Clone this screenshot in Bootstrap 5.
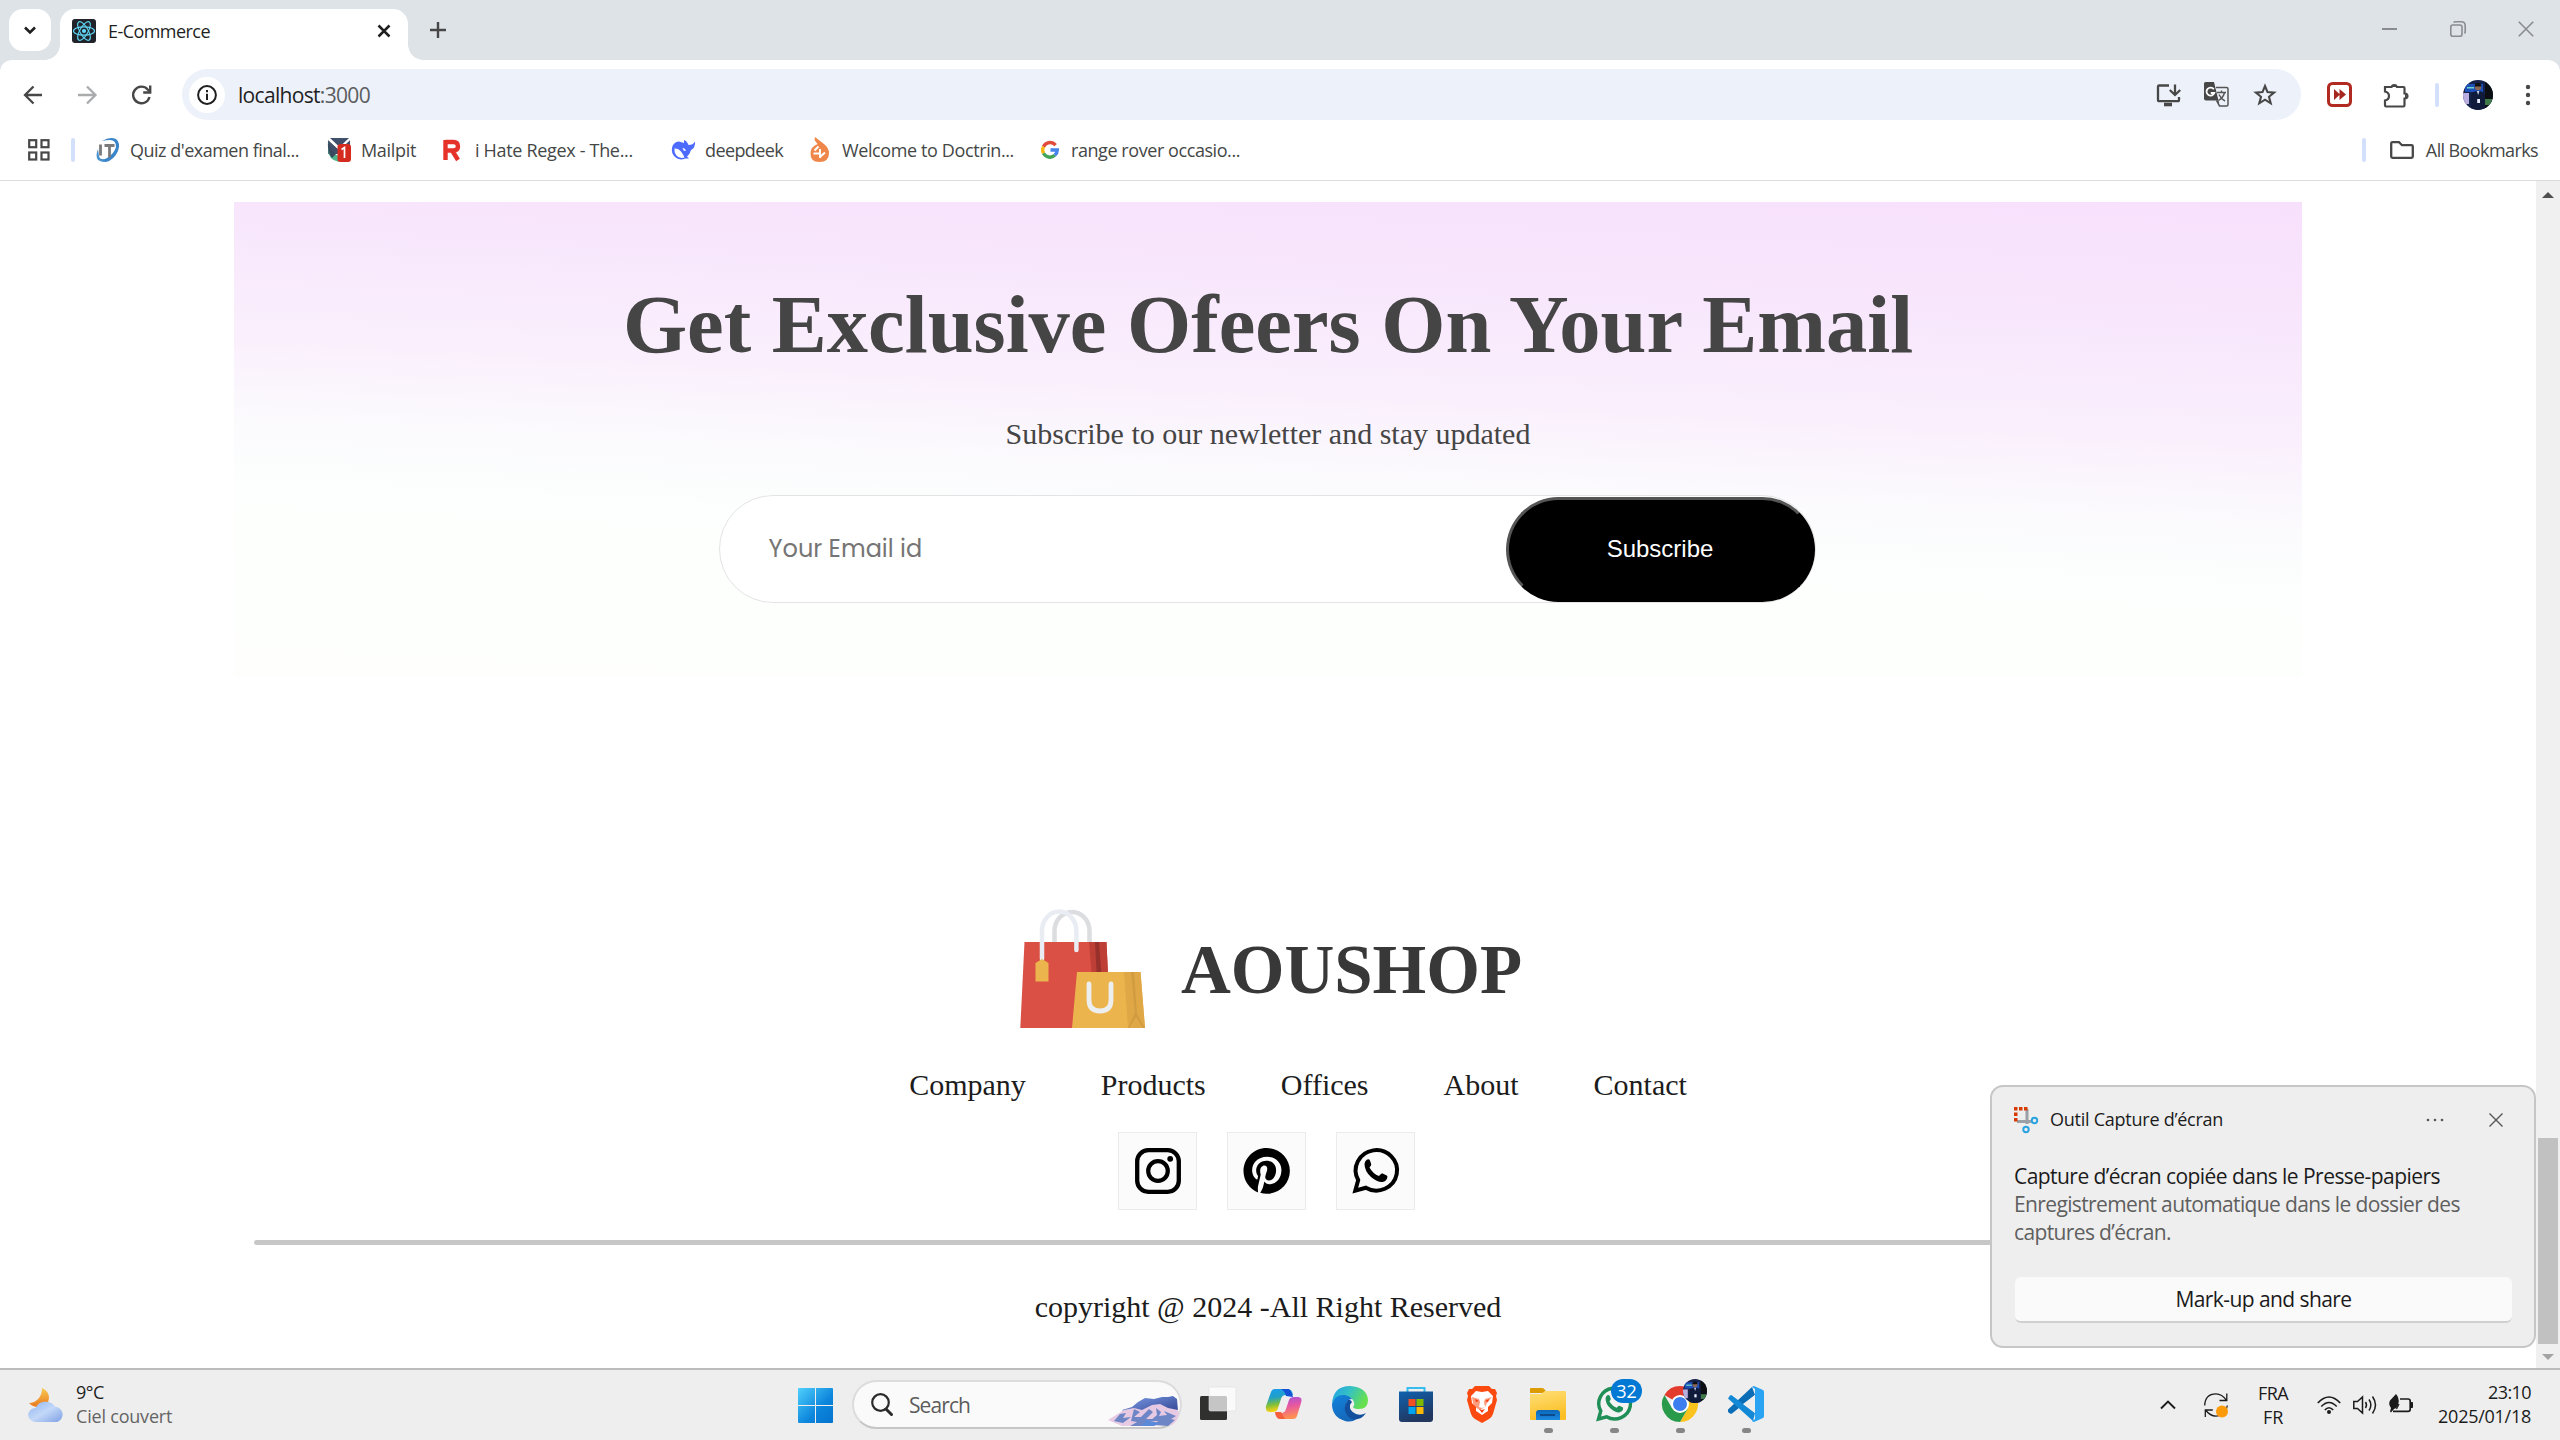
<!DOCTYPE html>
<html lang="en">
<head>
<meta charset="utf-8">
<title>E-Commerce</title>
<link href="https://cdn.jsdelivr.net/npm/bootstrap@5.3.0/dist/css/bootstrap.min.css" rel="stylesheet">
<style>
html,body{width:2560px;height:1440px;overflow:hidden}
body{font-family:"Open Sans","Noto Sans",sans-serif;font-size:18px;line-height:24px;color:#1f1f1f;background:#fff}
svg{display:block;flex:none;overflow:visible}
.t{white-space:nowrap;flex:none;display:block}
/* tracking per label */
.w-tab{letter-spacing:-.55px}.w-url{letter-spacing:-.68px}
.q1{letter-spacing:-.5px;margin-left:10px}.q2{letter-spacing:-.32px;margin-left:10px}.q3{letter-spacing:-.32px}.q4{letter-spacing:-.6px;margin-left:10px}
.q5{letter-spacing:-.39px}.q6{letter-spacing:-.43px}.q7{letter-spacing:-.6px}
.q8{letter-spacing:-.45px}.q9{letter-spacing:-.2px;color:#646464}.qs{letter-spacing:-.9px;margin-left:16px}
.qa{letter-spacing:-.6px}.qb{letter-spacing:-.2px}.qc{letter-spacing:-.58px}.qd{letter-spacing:-.26px}
.qe{letter-spacing:-.25px;margin-left:12px;margin-top:-2px}.qf{letter-spacing:-.55px}.qg,.qh{letter-spacing:-.63px}.qi{letter-spacing:-.58px}
/* tab strip */
.tabstrip{height:60px;background:#dee3e7;padding-left:9px}
.tabsearch{width:42px;height:42px;border-radius:14px;background:#fff;margin-top:9px}
.apptab{width:348px;height:51px;margin:9px 0 0 9px;background:#fff;border-radius:15px 15px 0 0;padding:0 17px 8px 12px;position:relative}
.apptab:before,.apptab:after{content:"";position:absolute;bottom:0;width:15px;height:15px}
.apptab:before{left:-15px;background:radial-gradient(circle at 0 0,transparent 14.5px,#fff 15px)}
.apptab:after{right:-15px;background:radial-gradient(circle at 100% 0,transparent 14.5px,#fff 15px)}
.newtab{margin:22px 0 0 22px}
.wincontrols{margin:21px 26px 0 auto;gap:52px}
/* toolbar */
.toolwrap{background:#dee3e7}
.toolbar{height:69px;background:#fff;border-radius:12px 12px 0 0;padding:0 24px 0 21px}
.ic-fwd{margin:0 30px 0 31px}
.ic-ext{margin-left:26px}
.ic-puz{margin-left:31px}
.sep-tool{margin-left:26px}
.ic-me{margin-left:24px}
.omnibox{height:51px;border-radius:26px;background:#edf1fa;width:2119px;margin-left:28px;padding:0 24px 0 7px}
.infodisc{width:36px;height:36px;border-radius:50%;background:#fff}
.urltext{font-size:21px;margin-left:13px;line-height:28px}
.port{color:#5a5d60}
.vsep{width:4px;height:24px;border-radius:2px;background:#d3e0fb;flex:none}
/* bookmarks */
.bookbar{height:52px;border-bottom:1px solid #dadde0;padding:0 22px 10px 27px;color:#444746}
.sep-book{margin:0 21px 0 20px}
.mk{height:24px}
.k1{width:231px}.k2{width:116px}.k3{width:228px}.k4{width:139px}.k5{width:231px}
/* page */
.viewport{height:1187px}
.shop{width:2536px;font-family:"Liberation Serif",serif;padding-top:21px}
.banner{width:2068px;height:475px;padding-top:77px;color:#454545;background:linear-gradient(183deg,#f7e0fc 0%,#f8e6fc 20%,#faf0fd 42%,#fbf9fd 54%,#fcfffd 67%,#fefffc 100%)}
.bigtitle{font-size:82.5px;line-height:90px;font-weight:700;margin:0}
.subt{font-size:30px;line-height:34px;margin-top:48px}
.mailform{width:1097px;height:108px;margin:44px 2px 0 0;border:1.5px solid #e3e3e3;border-radius:54px;background:#fff;padding-left:49px}
.mailform .ph{font-family:"Poppins","Lato",sans-serif;font-size:24px;line-height:36px;color:#757575}
.subbtn{width:309px;height:105px;border-radius:53px;background:#000;color:#fff;font:24px "Liberation Sans",Arial,sans-serif;border:3px solid;border-color:#555 #000 #000 #555;padding:0}
.foot{margin-top:232px;color:#1c1c1c}
.brandrow{gap:36px;padding-left:6px}
.brandname{font-size:69px;line-height:80px;font-weight:700;color:#383838;margin-top:2px}
.flinks{gap:75px;font-size:30px;line-height:34px;padding-left:60px;margin:39px 0 0;list-style:none}
.socials{gap:30px;margin:30px 3px 0 0}
.sbox{width:79px;height:78px;border:1.5px solid #ebebeb;background:#fbfbfb}
.rule{width:2028px;height:4.5px;border-radius:5px;background:#c7c7c7;margin-top:30px}
.copyr{font-size:30px;line-height:34px;margin-top:45px}
.scroller{width:24px;background:#f0f0f0;padding:11px 0 8px}
.thumb{width:20px;height:206px;background:#c1c1c1;margin-top:auto;margin-bottom:10px}
/* toast */
.snip{position:absolute;left:1990px;top:1085px;width:546px;height:263px;background:#eee;border:2px solid #c6c6c6;border-radius:13px;padding:20px 22px 0 22px;color:#1b1b1b}
.snip .grey{color:#5f5f5f}
.snip .body{font-size:21px;line-height:28px;margin:29px 0 0 0}
.ic-x{margin:0 9px 0 45px}
.snipbtn{height:46px;margin:31px 0 0 1px;border-radius:6px;background:#fafafa;border-bottom:2px solid #d0d0d0;font-size:21px}
/* taskbar */
.tbar{height:72px;background:#eee;border-top:2px solid #bcbcbc;padding:0 29px 0 28px}
.weather{width:770px}
.wtext{margin:-3px 0 0 10px}
.apps{gap:30px}
.app{width:36px;height:70px;padding-top:16px;position:relative}
.app.on:after{content:"";position:absolute;left:13.5px;bottom:7px;width:9px;height:5px;border-radius:3px;background:#868686}
.startcell{width:36px;margin-right:18px}
.srch{width:330px;height:49px;border-radius:25px;background:#fafafa;border:2px solid #dcdcdc;border-bottom-color:#c6c6c6;padding-left:17px;color:#5c5c5c;font-size:21px;margin:-1px 18px 0 0}
.hills{margin-top:13px}
.cnt{position:absolute;left:15px;top:9px;width:31px;height:24px;border-radius:12px;background:#0078d4;color:#fff;font-size:18px;line-height:24px;text-align:center}
.pin{position:absolute;left:21px;top:9px}
.tray{color:#1b1b1b}
.ic-sync{margin:0 30px 0 28px}
.ic-wifi{margin-left:29px}
.ic-gap{margin-left:12px}
.clock{margin:-3px 0 0 25px}
</style>
<script src="https://cdn.jsdelivr.net/npm/bootstrap@5.3.0/dist/js/bootstrap.bundle.min.js"></script>
</head>
<body>
<svg width="0" height="0" class="position-absolute">
<defs>
<clipPath id="disc"><circle cx="15" cy="15" r="15"/></clipPath>
<symbol id="face" viewBox="0 0 30 30"><g clip-path="url(#disc)"><rect width="30" height="30" fill="#15224a"/><rect x="2" y="4" width="18" height="8" fill="#1c4fb8"/><rect x="4" y="7" width="7" height="1.500" fill="#6fd4c8"/><rect x="22" y="0" width="8" height="30" fill="#0b0f14"/><rect x="0" y="13" width="6" height="11" fill="#b9aee0"/><rect x="22" y="19" width="7" height="6" fill="#3e7a4a"/><path d="M8 30V16q1-5 7-5t7 5v14z" fill="#101a3a"/><path d="M13.800 11h2.600l-1.200 4z" fill="#c9d2ea"/><circle cx="15" cy="7" r="3.200" fill="#8a6652"/><path d="M11.600 6.500a3.400 3.400 0 0 1 6.800 0z" fill="#111"/><rect x="14.200" y="19" width="2.800" height="4" fill="#e8eefc"/></g></symbol>
</defs>
</svg>

<header>
<div class="tabstrip d-flex">
  <div class="tabsearch d-flex align-items-center justify-content-center"><svg width="12" height="9" viewBox="0 0 12 9"><path d="M1 1.500l5 5 5-5" fill="none" stroke="#1f1f1f" stroke-width="2.600"/></svg></div>
  <div class="apptab d-flex align-items-center">
    <svg width="24" height="24" viewBox="0 0 24 24"><rect width="24" height="24" rx="3" fill="#20232a"/><g fill="none" stroke="#61dafb" stroke-width="1.100"><ellipse cx="12" cy="12" rx="10.500" ry="4.100"/><ellipse cx="12" cy="12" rx="10.500" ry="4.100" transform="rotate(60 12 12)"/><ellipse cx="12" cy="12" rx="10.500" ry="4.100" transform="rotate(120 12 12)"/></g><circle cx="12" cy="12" r="2.100" fill="#61dafb"/></svg>
    <span class="t ms-2 ps-1 w-tab">E-Commerce</span>
    <svg class="ms-auto" width="14" height="14" viewBox="0 0 14 14"><path d="M1.500 1.500l11 11m0-11l-11 11" stroke="#1f1f1f" stroke-width="2.500"/></svg>
  </div>
  <svg class="newtab" width="16" height="16" viewBox="0 0 16 16"><path d="M8 0v16M0 8h16" stroke="#474747" stroke-width="2.400"/></svg>
  <div class="wincontrols d-flex">
    <svg width="16" height="16" viewBox="0 0 16 16"><path d="M0 8h15" stroke="#8a8d8f" stroke-width="2"/></svg>
    <svg width="16" height="16" viewBox="0 0 16 16" fill="none" stroke="#8a8d8f" stroke-width="1.600"><rect x=".8" y="4" width="11.200" height="11.200" rx="2"/><path d="M3.500 1.500q.8-.7 2-.7h5.700q4 0 4 4v5.700q0 1.200-.7 2"/></svg>
    <svg width="16" height="16" viewBox="0 0 16 16"><path d="M.8 .8l14.400 14.400m0-14.400L.8 15.200" stroke="#8a8d8f" stroke-width="1.600"/></svg>
  </div>
</div>
<div class="toolwrap"><div class="toolbar d-flex align-items-center">
  <svg width="24" height="24" viewBox="0 0 24 24" fill="none" stroke="#474747" stroke-width="2.300"><path d="M21 12H4.500M12.500 3.500L4 12l8.500 8.500"/></svg>
  <svg width="24" height="24" viewBox="0 0 24 24" fill="none" stroke="#a9abad" stroke-width="2.300" class="ic-fwd"><path d="M2 12h17M11 3.500l8.500 8.500-8.500 8.500"/></svg>
  <svg width="24" height="24" viewBox="0 0 24 24" fill="none" stroke="#474747" stroke-width="2.400"><path d="M19.500 14a8.300 8.300 0 1 1-1.800-7.500l2.600 2.700"/><path d="M20.200 2.500v7h-7"/></svg>
  <div class="omnibox d-flex align-items-center">
    <div class="infodisc d-flex align-items-center justify-content-center"><svg width="20" height="20" viewBox="0 0 20 20"><circle cx="10" cy="10" r="8.900" fill="none" stroke="#1f1f1f" stroke-width="2"/><path d="M10 8.700V15M10 5v2.200" stroke="#1f1f1f" stroke-width="2"/></svg></div>
    <span class="t urltext w-url">localhost<span class="port">:3000</span></span>
    <svg class="ms-auto" width="24" height="24" viewBox="0 0 24 24" fill="none" stroke="#474747" stroke-width="2.300"><path d="M13 2.500H3.200q-1.200 0-1.200 1.200v13q0 1.500 1.200 1.500h18.600q1.200 0 1.200-1.500V14"/><path d="M8 21.500h8" stroke-width="3.600"/><path d="M19 1.500v10M13.800 7l5.200 5 5.200-5"/></svg>
    <svg class="mx-4" width="25" height="25" viewBox="0 0 25 25"><path d="M1.500 0H10l4.500 18.500H2Q0 18.500 0 16.500v-15Q0 0 1.500 0z" fill="#474747"/><path d="M12 5.500h10.500q1.500 0 1.500 1.500v15.500q0 1.500-1.500 1.500h-7l-3-5.500" fill="none" stroke="#555" stroke-width="1.500"/><path d="M14.500 18.500l-2 0 3 5z" fill="#474747"/><path d="M9.800 7.300A4 4 0 1 0 10.300 11H6.800" fill="none" stroke="#fff" stroke-width="1.800"/><path d="M13 10.500h9M17.500 8.500v2M20.500 10.500q-1 5-6 8M15 12.500q2 4.500 6 6.500" fill="none" stroke="#555" stroke-width="1.400"/></svg>
    <svg width="24" height="24" viewBox="0 0 24 24"><path d="M12 3l2.500 6.100 6.600.5-5.100 4.200 1.700 6.500L12 16.700l-5.700 3.600L8 13.800 2.900 9.600l6.600-.5z" fill="none" stroke="#474747" stroke-width="2.100"/></svg>
  </div>
  <svg class="ic-ext" width="25" height="25" viewBox="0 0 25 25"><rect x="1.500" y="1.500" width="22" height="22" rx="4" fill="#fff" stroke="#b02a22" stroke-width="3"/><path d="M7 7l6 5.500L7 18zM12.500 7l6.500 5.500-6.500 5.500z" fill="#a62620"/></svg>
  <svg class="ic-puz" width="26" height="26" viewBox="0 0 26 26"><path d="M2 5h6.500a3 3 0 0 1 5.500 0H20.500q1 0 1 1v5.500q3 .3 3 2.500t-3 2.500V23q0 1.500-1 1.500H3q-1 0-1-1.500v-4.500q4-.8 4-4.500t-4-4.500z" fill="none" stroke="#474747" stroke-width="2.200"/><path d="M8.500 5a2.900 2.900 0 0 1 5.500 0zM22 11.500a2.900 2.900 0 0 1 0 5z" fill="#474747"/></svg>
  <div class="vsep sep-tool"></div>
  <svg width="30" height="30" class="ic-me"><use href="#face"/></svg>
  <svg class="ms-auto" width="16" height="24" viewBox="0 0 16 24" fill="#474747"><circle cx="8" cy="4" r="2.200"/><circle cx="8" cy="12" r="2.200"/><circle cx="8" cy="20" r="2.200"/></svg>
</div></div>
<nav class="bookbar d-flex align-items-center">
  <svg width="24" height="24" viewBox="0 0 24 24" fill="none" stroke="#474747" stroke-width="2.200"><rect x="2.200" y="2.200" width="7" height="7"/><rect x="14.500" y="2.200" width="7" height="7"/><rect x="2.200" y="14.500" width="7" height="7"/><rect x="14.500" y="14.500" width="7" height="7"/></svg>
  <div class="vsep sep-book"></div>
  <div class="mk k1 d-flex align-items-center"><svg width="24" height="24" viewBox="0 0 24 24"><path d="M6 3Q14-2 20 1q5 4 2 12-4 9-12 11-6 0-8-5 4 4 9 1 7-4 9-11 0-7-6-7-4 0-8 1z" fill="#3b86c8"/><path d="M4.500 6.500v11M8.500 7.500h10M13.500 7.500v12" stroke="#7b7b7b" stroke-width="2.800" fill="none"/><path d="M2 11Q-1 18 2 22q4 3 9 1-7 0-8-5z" fill="#4b93d0"/></svg><span class="t q1">Quiz d'examen final...</span></div>
  <div class="mk k2 d-flex align-items-center"><svg width="24" height="24" viewBox="0 0 24 24"><path d="M1 2l11 10L23 2v14H1z" fill="#41506a"/><path d="M3 0h19l-9.500 9z" fill="#41506a"/><path d="M1 3v8q0 11 11 13l2-6Q4 18 1 3z" fill="#4fb58a"/><path d="M1 3q2 9 8 13l-4 4Q0 14 1 3z" fill="#38495f"/><path d="M1.500 1l11 10L23 1" fill="none" stroke="#fff" stroke-width="1.500"/><rect x="10.500" y="6" width="13.500" height="18" rx="3" fill="#d52b1e"/><path d="M14.500 11.500l3-2V20" fill="none" stroke="#fff" stroke-width="1.700"/></svg><span class="t q2">Mailpit</span></div>
  <div class="mk k3 d-flex align-items-center"><svg width="20" height="22" viewBox="0 0 20 22"><path d="M2.500 1v20M2.500 3h8q4.500 0 4.500 4.300 0 4.200-4.500 4.200h-7M9.500 12L15 21" fill="none" stroke="#e6332a" stroke-width="4.400"/></svg><span class="t q3 ms-2 ps-1">i Hate Regex - The...</span></div>
  <div class="mk k4 d-flex align-items-center"><svg width="24" height="20" viewBox="0 0 24 20"><path d="M1 8Q2 2 8 1.500l5 1.500V0q3 1 4.500 5Q22 5 24 1.500 24.500 8 20 10q-1 4-4 6.500l2 2h-3.500Q8 21 4 17 0 13 1 8z" fill="#4d6bfe"/><path d="M3.500 8.500q4-.5 6.500 3t3.500 6Q8 19 5 15 3 12 3.500 8.500z" fill="#fff"/><path d="M11.500 8q2-.5 3.500 2.500l-2 .5z" fill="#fff"/></svg><span class="t q4">deepdeek</span></div>
  <div class="mk k5 d-flex align-items-center"><svg width="20" height="25" viewBox="0 0 20 25"><path d="M5 0l9 7q5 4 5 9 0 9-9.500 9T.5 16q0-6 7-9L4.500 3z" fill="#f0874a"/><path d="M8.500 9.500l-4 4M3.500 16.500h7M10 12v9M10 20l5-4.500" stroke="#fff" stroke-width="2" fill="none"/></svg><span class="t q5 ms-2 ps-1">Welcome to Doctrin...</span></div>
  <div class="mk d-flex align-items-center"><svg width="18" height="18" viewBox="0 0 18 18" fill="none" stroke-width="3.400"><path d="M14.600 4.100A7.300 7.300 0 0 0 2.500 5.700" stroke="#e04a3a"/><path d="M2.500 5.700a7.300 7.300 0 0 0 0 6.600" stroke="#f6b912"/><path d="M2.500 12.300a7.300 7.300 0 0 0 11.300 2" stroke="#43a356"/><path d="M13.800 14.300A7.300 7.300 0 0 0 16.300 9H9.500" stroke="#4683ea"/></svg><span class="t q6 ms-2 ps-1">range rover occasio...</span></div>
  <div class="vsep ms-auto"></div>
  <svg class="ms-4" width="24" height="18" viewBox="0 0 24 18"><path d="M1.200 2.500q0-1.300 1.300-1.300H9l3 3h9.500q1.300 0 1.300 1.300v10q0 1.300-1.300 1.300h-19q-1.300 0-1.300-1.300z" fill="none" stroke="#474747" stroke-width="2.300"/></svg>
  <span class="t q7 ms-2 ps-1">All Bookmarks</span>
</nav>
</header>

<div class="viewport d-flex">
<main class="shop d-flex flex-column align-items-center">
  <section class="banner d-flex flex-column align-items-center">
    <h1 class="bigtitle t">Get Exclusive Ofeers On Your Email</h1>
    <div class="subt t">Subscribe to our newletter and stay updated</div>
    <div class="mailform d-flex align-items-center justify-content-between"><span class="ph t">Your Email id</span><button class="subbtn" type="button">Subscribe</button></div>
  </section>
  <footer class="foot d-flex flex-column align-items-center">
    <div class="brandrow d-flex align-items-center">
      <svg width="125" height="120" viewBox="0 0 125 120"><path d="M34.500 34V22a17.500 19 0 0 1 35 0v12" fill="none" stroke="#dcdde0" stroke-width="4.500"/><path d="M4.500 33h82l4 86H.3z" fill="#da5045"/><path d="M69 33h17.500l2 44-17-14z" fill="#bd3f36"/><path d="M75 33h4l3 40-5-2z" fill="#98312b"/><path d="M22 50V22a17.200 19.500 0 0 1 34.400 0v19" fill="none" stroke="#e9edf3" stroke-width="4.500" stroke-linecap="round"/><path d="M15.500 54l6.500-4 6.500 4v18.500h-13z" fill="#ecb44d"/><path d="M57 63h63.500l4.500 56H52z" fill="#ecb44d"/><path d="M104 63h16.500l4.500 56h-17z" fill="#dfa745"/><path d="M111 63h3l3 42 8 14h-2l-7-11-7 11h-1l7-15z" fill="#d19c40"/><path d="M69 75v16q0 11 11 11t11-11V75" fill="none" stroke="#eceef0" stroke-width="4.800" stroke-linecap="round"/></svg>
      <div class="brandname t">AOUSHOP</div>
    </div>
    <ul class="flinks d-flex"><li>Company</li><li>Products</li><li>Offices</li><li>About</li><li>Contact</li></ul>
    <div class="socials d-flex">
      <div class="sbox d-flex align-items-center justify-content-center"><svg width="46" height="46" viewBox="0 0 46 46"><rect x="2.200" y="2.200" width="41.600" height="41.600" rx="11" fill="none" stroke="#000" stroke-width="4.300"/><circle cx="23" cy="23" r="9.800" fill="none" stroke="#000" stroke-width="4.200"/><circle cx="35.200" cy="10.800" r="2.900"/></svg></div>
      <div class="sbox d-flex align-items-center justify-content-center"><svg width="47" height="46" viewBox="0 0 24 24"><path d="M12 0C5.400 0 0 5.400 0 12c0 5.100 3.200 9.400 7.600 11.200-.1-.9-.2-2.400 0-3.400l1.400-6s-.3-.7-.3-1.800c0-1.700 1-2.900 2.200-2.900 1 0 1.500.8 1.500 1.700 0 1-.7 2.600-1 4-.3 1.200.6 2.200 1.800 2.200 2.100 0 3.800-2.200 3.800-5.500 0-2.900-2.100-4.900-5-4.900-3.400 0-5.400 2.600-5.400 5.200 0 1 .4 2.100.9 2.700.1.100.1.200.1.300l-.3 1.400c-.1.200-.2.300-.4.200-1.500-.7-2.400-2.900-2.400-4.600 0-3.800 2.700-7.200 7.900-7.200 4.100 0 7.400 2.900 7.400 6.900 0 4.100-2.600 7.400-6.200 7.400-1.200 0-2.300-.6-2.700-1.400l-.7 2.800c-.3 1-1 2.300-1.500 3.100 1.100.3 2.300.5 3.500.5 6.600 0 12-5.400 12-12S18.600 0 12 0z"/></svg></div>
      <div class="sbox d-flex align-items-center justify-content-center"><svg width="47" height="46" viewBox="0 0 47 46"><path d="M3.300 42.600l2.900-10.600A20.700 20.200 0 1 1 13.800 39.700z" fill="none" stroke="#000" stroke-width="4"/><path id="tel" d="M12.500 16q0-2.500 2.200-4.300 1.300-.8 2.600-.2.600.3 1.900 4.500.4 1.200-1.700 3.500 3.400 6.300 9.500 8.500 2.400-3 3.500-2.600l4.300 2q.9.500.5 2.300-.8 3.600-4.800 4.300-4.600.7-11.500-5-6.500-6-6.500-13z"/></svg></div>
    </div>
    <div class="rule"></div>
    <div class="copyr t">copyright @ 2024 -All Right Reserved</div>
  </footer>
</main>
<div class="scroller d-flex flex-column align-items-center">
  <svg width="12" height="6"><path d="M0 6l6-6 6 6z" fill="#505050"/></svg>
  <div class="thumb"></div>
  <svg width="12" height="6"><path d="M0 0l6 6 6-6z" fill="#a3a3a3"/></svg>
</div>
</div>

<footer class="tbar d-flex align-items-center">
  <div class="weather d-flex align-items-center">
    <svg width="38" height="36" viewBox="0 0 38 36"><defs><linearGradient id="cl" x2="1" y2="1"><stop stop-color="#8fb3f0"/><stop offset=".5" stop-color="#c3d8f8"/><stop offset="1" stop-color="#7ea0e4"/></linearGradient><linearGradient id="mn" x2="0" y2="1"><stop stop-color="#f8cb55"/><stop offset="1" stop-color="#e9781c"/></linearGradient></defs><path d="M14 1q7 3 7 10 0 8-12 9-5-.5-8-4 6 0 10-5 3-4 3-10z" fill="url(#mn)"/><path d="M8 35a7.500 7 0 0 1-.5-14A11 10 0 0 1 27 19.500 8.500 8 0 0 1 29 35z" fill="url(#cl)"/></svg>
    <div class="wtext"><div class="t q8">9°C</div><div class="t q9">Ciel couvert</div></div>
  </div>
  <div class="startcell"><svg width="35" height="35" viewBox="0 0 35 35"><defs><linearGradient id="wn" x2="1" y2="1"><stop stop-color="#4fd0fc"/><stop offset=".6" stop-color="#0c85dc"/><stop offset="1" stop-color="#0473cf"/></linearGradient></defs><path d="M1 0h16v17H0V1q0-1 1-1zM18 0h16q1 0 1 1v16H18zM0 18h17v17H1q-1 0-1-1zM18 18h17v16q0 1-1 1H18z" fill="url(#wn)"/></svg></div>
  <div class="srch d-flex align-items-center">
    <svg width="22" height="23" viewBox="0 0 22 23"><circle cx="9.500" cy="9.500" r="8.300" fill="none" stroke="#2a2a2a" stroke-width="2.200"/><path d="M15 16l5.500 5.500" stroke="#2a2a2a" stroke-width="3" stroke-linecap="round"/></svg>
    <span class="t qs">Search</span>
    <svg class="ms-auto hills" width="72" height="30" viewBox="0 0 72 30"><defs><linearGradient id="mt" x2="1" y2="1"><stop stop-color="#7fa0ea"/><stop offset="1" stop-color="#2c3e8c"/></linearGradient></defs><path d="M14 14l10-3 6-5 7-4 9 1 8-2 6 0 5-1 4 3 1 12-20 2-30 2z" fill="url(#mt)"/><path d="M0 24l8-5 8-5 10-2 8 2 10-5 8-1 8 4 10 2 1 3-2 7-5 5-50 1z" fill="#e6c9e2"/><path d="M6 25l6-7 6-1-3 5 8-1-8 6zM26 13l6 3-6 5 7 0 8-8 4 3-7 7 8 0-12 7H22l7-4-6-1zM48 12l5 4-2 4 8-1-3-4 12 5-5 3 4 1-7 6-14-1 4-4-8 0 7-6z" fill="#6f86c6"/><path d="M38 24l14 3-6 3H33z" fill="#5b8ad9"/></svg>
  </div>
  <div class="apps d-flex">
    <div class="app"><svg width="36" height="36" viewBox="0 0 36 36"><rect x="0" y="10" width="27" height="24" rx="1.500" fill="#30302f"/><rect x="9" y="1" width="27" height="24" rx="1.500" fill="#fff" fill-opacity=".72" stroke="#ddd" stroke-width=".6"/></svg></div>
    <div class="app"><svg width="36" height="36" viewBox="0 0 36 36"><defs><linearGradient id="ca" x2=".2" y2="1"><stop stop-color="#1b9cf0"/><stop offset=".4" stop-color="#1fa0c8"/><stop offset=".7" stop-color="#7dbf3c"/><stop offset="1" stop-color="#ffd40f"/></linearGradient><linearGradient id="cb" x2=".2" y1="0" y2="1"><stop stop-color="#a04fe0"/><stop offset=".5" stop-color="#e858a0"/><stop offset="1" stop-color="#ff8f52"/></linearGradient></defs><path d="M9 3h13q4 0 5 6l-7 0q-4 0-5 4l-3 9q-1 4-5 4H4q-5 0-4-6L5 6q1-3 4-3z" fill="url(#ca)"/><path d="M18 3h4q3 0 5 8l-7-1q-1-5-5-7z" fill="#1452d8"/><path d="M27 33H14q-4 0-5-6l6 0q4 0 5-4l3-9q1-3 5-3h4q5 0 3 6l-4 13q-1 3-4 3z" fill="url(#cb)"/><path d="M14 33q-3 0-5-7h6l4 7z" fill="#f5603c"/></svg></div>
    <div class="app"><svg width="36" height="36" viewBox="0 0 36 36"><defs><linearGradient id="ea" x2="1" y2=".4"><stop stop-color="#1f9fe8"/><stop offset=".5" stop-color="#35c1c4"/><stop offset="1" stop-color="#66e04f"/></linearGradient><linearGradient id="eb" x2=".6" y2="1"><stop stop-color="#1284dc"/><stop offset="1" stop-color="#1566b8"/></linearGradient></defs><path d="M0 18Q1 0 18 0q17 1 18 14 0 9-9 9-5 0-6-2 2-2 1-5-2-5-8-6Q4 9 0 18z" fill="url(#ea)"/><path d="M0 18Q3 8 13 9q5 1 7 4-6 0-6 8 1 10 12 11Q20 37 13 35 0 31 0 18z" fill="url(#eb)"/><path d="M16 14q-6 8-1 15t14 3q3-2 5-5-5 3-10 1-7-3-6-9 1-2 2-3-2-3-4-2z" fill="#12509e"/></svg></div>
    <div class="app"><svg width="36" height="36" viewBox="0 0 36 36"><defs><linearGradient id="sa" x2=".4" y2="1"><stop stop-color="#0f62b0"/><stop offset="1" stop-color="#22365e"/></linearGradient></defs><path d="M9.500 8V2h17v6" fill="none" stroke="#35bdf0" stroke-width="2"/><path d="M1 5.500h34V33q0 3-3 3H4q-3 0-3-3z" fill="url(#sa)"/><path d="M10.500 13h7v7h-7z" fill="#f25022"/><path d="M18.500 13h7v7h-7z" fill="#7fba00"/><path d="M10.500 21h7v7h-7z" fill="#00a4ef"/><path d="M18.500 21h7v7h-7z" fill="#ffb900"/></svg></div>
    <div class="app"><svg width="36" height="36" viewBox="0 0 36 36"><path d="M11 0h14l3 3 3 0 2 4-1 3 1 4-4 14q-1 3-4 5l-7 4-7-4q-3-2-4-5L3 14l1-4-1-3 2-4 3 0z" fill="#fb4a10"/><path d="M12 5l6 1 6-1 5 5-1 7-4 4 0 4-6 4-6-4 0-4-4-4-1-7z" fill="#fff"/><path d="M8 11l7 2 1 3-1 5 3 1 3-1-1-5 1-3 7-2-5 6-2 4-5 3-5-3-2-4z" fill="#fb4a10" fill-opacity=".55"/><path d="M11 13l4 2-3 1zM25 13l-4 2 3 1zM15 23l3 1 3-1-3 4z" fill="#fb3a10"/></svg></div>
    <div class="app on"><svg width="36" height="36" viewBox="0 0 36 36"><path d="M0 3q0-1 1-1h11q2 0 3 2l2 3H0z" fill="#dd9c05"/><defs><linearGradient id="fo" x2=".3" y2="1"><stop stop-color="#ffe07a"/><stop offset="1" stop-color="#fbbf25"/></linearGradient><linearGradient id="fb" x2="0" y2="1"><stop stop-color="#0b66b8"/><stop offset="1" stop-color="#1b8be0"/></linearGradient></defs><path d="M0 8h11l4-3h20q1 0 1 1v27q0 1-1 1H1q-1 0-1-1z" fill="url(#fo)"/><path d="M6 34v-7q0-3 3-3h18q3 0 3 3v7z" fill="url(#fb)"/><path d="M10 29h15" stroke="#0a3c74" stroke-width="1.500"/></svg></div>
    <div class="app on"><svg width="36" height="36" viewBox="0 0 47 46"><path d="M3.300 42.600l2.900-10.600A20.700 20.200 0 1 1 13.800 39.700z" fill="#fff" fill-opacity=".3" stroke="#1f8f57" stroke-width="4.500"/><use href="#tel" fill="#1f8f57"/></svg><span class="cnt">32</span></div>
    <div class="app on"><svg width="36" height="36" viewBox="0 0 36 36"><path d="M18 18L2.400 9a18 18 0 0 1 31.200 0z" fill="#e33b2e"/><path d="M33.600 9A18 18 0 0 1 18 36l7.800-13.500L24 9z" fill="#fcc31e"/><path d="M2.400 9a18 18 0 0 0 15.600 27l7.800-13.500H10.200z" fill="#289a49"/><circle cx="18" cy="18" r="9" fill="#fff"/><circle cx="18" cy="18" r="7" fill="#3c7df0"/></svg><svg class="pin" width="24" height="24"><use href="#face" width="24" height="24"/></svg></div>
    <div class="app on"><svg width="36" height="36" viewBox="0 0 36 36"><path d="M0 23.500L24 1l3 8L4 27.500q-1 .7-2 0L0 26z" fill="#0a6db5"/><path d="M0 12.500l2-3q1-.8 2 0L27 27l-2 8z" fill="#1389d6"/><path d="M26 0l9 4q1 .5 1 2v24q0 1.500-1 2l-9 4q-1 0-2-1l3-2V3l-3-2q1-1 2-1z" fill="#2aa3f3"/><path d="M27 9L15 18l12 9z" fill="#eee"/></svg></div>
  </div>
  <div class="tray d-flex align-items-center ms-auto">
    <svg width="16" height="10" viewBox="0 0 16 10"><path d="M1 8.500l7-7 7 7" fill="none" stroke="#1b1b1b" stroke-width="1.900"/></svg>
    <svg class="ic-sync" width="24" height="24" viewBox="0 0 24 24" fill="none" stroke="#1b1b1b" stroke-width="1.300"><path d="M.7 12.500Q1 1 12 .8q6 0 10.500 6.500M22.800.5v7h-7.300M23.300 12.500Q22 23 12 23.200 6 23 1.500 17M1.300 24v-7h7.500"/><circle cx="18" cy="18.500" r="6" fill="#fb9a0a" stroke="none"/></svg>
    <div class="text-center"><div class="t qa">FRA</div><div class="t qb">FR</div></div>
    <svg class="ic-wifi" width="24" height="18" viewBox="0 0 24 18" fill="none" stroke="#1b1b1b" stroke-width="1.700"><path d="M.8 7Q12-5 23.200 7M4.300 10.500q7.700-8 15.400 0M7.800 14q4.200-4.500 8.400 0"/><circle cx="12" cy="16" r="2" fill="#1b1b1b" stroke="none"/></svg>
    <svg class="ic-gap" width="24" height="20" viewBox="0 0 24 20" fill="none" stroke="#1b1b1b" stroke-width="1.500"><path d="M.8 6.500h3.700L9.500 2v16l-5-4.500H.8zM12.500 7q2 3 0 6M16 4.500q3.700 5.500 0 11M19.500 1.500q6 8.500 0 17"/></svg>
    <svg class="ic-gap" width="24" height="20" viewBox="0 0 24 20"><path d="M11 4h8q2.200 0 2.200 2.200v8q0 2.200-2.200 2.200H4" fill="none" stroke="#1b1b1b" stroke-width="1.700"/><path d="M22 7.500h1.500v5H22z" fill="#1b1b1b" stroke="#1b1b1b"/><path d="M7-1q3.500 4 2.500 9-.5 5-4.500 6L2 17.500 1 16.500 2 13Q-1 9 1 5.500z" fill="#1b1b1b"/><path d="M10 9q-1.500 3-2.500 5" stroke="#1b1b1b" stroke-width="1.200"/></svg>
    <div class="clock text-end d-flex flex-column align-items-end"><div class="t qc">23:10</div><div class="t qd">2025/01/18</div></div>
  </div>
</footer>

<aside class="snip">
  <div class="d-flex align-items-center">
    <svg width="24" height="26" viewBox="0 0 24 26"><path d="M13 2v15M3 14.500h14" stroke="#9aa0a6" stroke-width="3"/><path d="M0 0h3.500v3.500H0zM5 0h3.500v3.500H5zM10 0h3.500v3.500H10zM0 5.500h3.500V9H0zM0 11h3.500v3.500H0z" fill="#d83b01"/><circle cx="20.500" cy="13.500" r="2.700" fill="none" stroke="#2ba3e0" stroke-width="2"/><circle cx="12" cy="22.500" r="2.700" fill="none" stroke="#2ba3e0" stroke-width="2"/></svg>
    <span class="t qe">Outil Capture d’écran</span>
    <svg class="ms-auto" width="18" height="4" fill="#555"><circle cx="2" cy="2" r="1.300"/><circle cx="9" cy="2" r="1.300"/><circle cx="16" cy="2" r="1.300"/></svg>
    <svg class="ic-x" width="14" height="14" viewBox="0 0 14 14"><path d="M.5 .5l13 13m0-13l-13 13" stroke="#555" stroke-width="1.400"/></svg>
  </div>
  <div class="body"><div class="t qf">Capture d’écran copiée dans le Presse-papiers</div><div class="t grey qg">Enregistrement automatique dans le dossier des</div><div class="t grey qh">captures d’écran.</div></div>
  <div class="snipbtn d-flex align-items-center justify-content-center"><span class="t qi">Mark-up and share</span></div>
</aside>
</body>
</html>
